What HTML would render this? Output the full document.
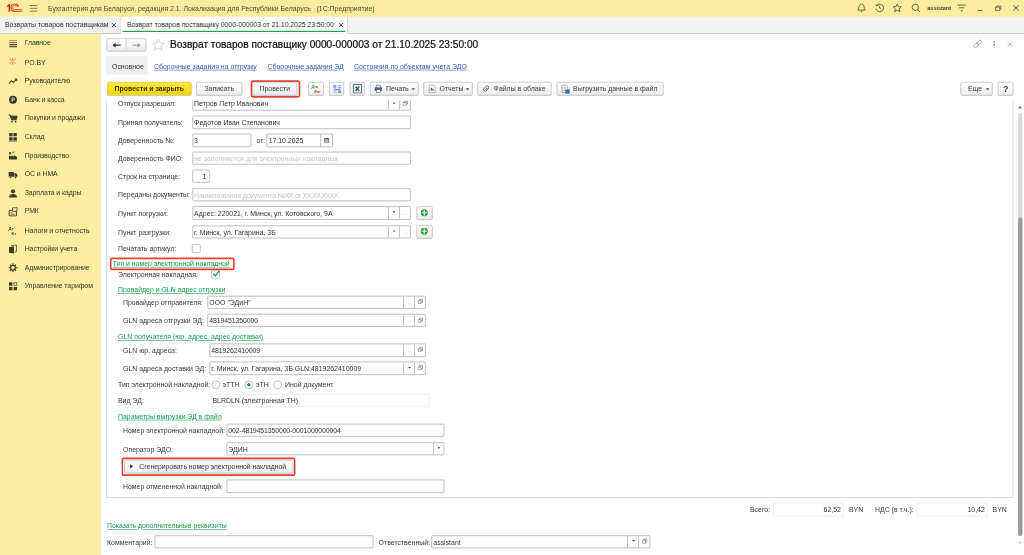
<!DOCTYPE html>
<html lang="ru">
<head>
<meta charset="utf-8">
<title>Возврат товаров поставщику</title>
<style>
*{box-sizing:border-box;margin:0;padding:0}
html,body{width:1024px;height:555px;overflow:hidden;background:#fff}
#root{position:absolute;left:0;top:0;width:1920px;height:954.7px;transform:scale(0.533333,0.581333);transform-origin:0 0;overflow:hidden}
body{font-family:"Liberation Sans",Arial,sans-serif;font-size:12.99px;color:#3a3a3a;position:relative}
.a{position:absolute}
.t{position:absolute;white-space:nowrap;line-height:17.2px;height:17.2px}
#top{left:0;top:0;width:1920px;height:28.56px;background:#fbed9e}
#tabs{left:0;top:28.56px;width:1920px;height:29.24px;background:#f2f2f2;border-bottom:1px solid #a9a9a9}
#side{left:0;top:57.8px;width:187.5px;height:897.94px;background:#fcee9f}
#sideshadow{left:187.5px;top:57.8px;width:3.75px;height:897.94px;background:linear-gradient(90deg,#e4e0c8,#fff)}
.si{position:absolute;left:46.31px;letter-spacing:-0.13px;white-space:nowrap;line-height:17.2px;height:17.2px;color:#333}
.lnk{color:#2a5db0;text-decoration:underline}
.glnk{color:#149c4a;text-decoration:underline}
.btn{position:absolute;border:1px solid #a8a8a8;border-radius:3px;background:linear-gradient(#ffffff,#ececec);height:23.39px;line-height:22.53px;text-align:center;white-space:nowrap;color:#3a3a3a;box-shadow:0 0.94px 0.94px rgba(0,0,0,.18)}
.in{position:absolute;border:1px solid #8c8c8c;border-radius:1.69px;background:#fff;height:22.36px;line-height:21.16px;white-space:nowrap;padding-left:2.44px;color:#333;overflow:hidden}
.ph{color:#c4c4c4}
.sep{position:absolute;top:0;bottom:0;width:1px;background:#909090}
.lab{position:absolute;white-space:nowrap;line-height:17.2px;height:17.2px;color:#383838}
.lab.glnk{color:#149c4a}
</style>
</head>
<body>
<div id="root">
<!-- TOP BAR -->
<div id="top" class="a"></div>
<div id="tabs" class="a"></div>
<div id="side" class="a"></div>
<div id="sideshadow" class="a"></div>

<!-- logo 1C -->
<svg class="a" style="left:12.19px;top:6.02px" width="31.88" height="17.2" viewBox="0 0 17 10" preserveAspectRatio="none">
 <path d="M0.8 3.3 L2.95 1.3 L2.95 8.3" fill="none" stroke="#e0312b" stroke-width="1.6"/>
 <path d="M11.85 3.4 A3.65 3.65 0 1 0 8.3 7.75 L15.5 7.75" fill="none" stroke="#e0312b" stroke-width="1.1"/>
 <path d="M10.2 3.6 A2 2 0 1 0 8.3 6.1 L15.5 6.1" fill="none" stroke="#e0312b" stroke-width="0.75"/>
</svg>
<!-- hamburger -->
<svg class="a" style="left:55.31px;top:6.88px" width="16.88" height="15.48" viewBox="0 0 9 9" preserveAspectRatio="none">
 <path d="M0.5 1.45H8M0.5 4.3H8M0.5 7.1H8" stroke="#6b6650" stroke-width="0.85" fill="none"/>
</svg>
<div class="t" style="left:90px;top:6.02px;color:#4a4632">Бухгалтерия для Беларуси, редакция 2.1. Локализация для Республики Беларусь&nbsp;&nbsp;&nbsp;(1С:Предприятие)</div>
<!-- bell -->
<svg class="a" style="left:1605.94px;top:5.16px" width="18.75" height="17.2" viewBox="0 0 10 10" preserveAspectRatio="none">
 <path d="M1.2 7.2 C2.4 6.2 2.2 4.6 2.6 3.2 C3 1.8 4 1.2 5 1.2 C6 1.2 7 1.8 7.4 3.2 C7.8 4.6 7.6 6.2 8.8 7.2 Z" fill="none" stroke="#4a4632" stroke-width="0.8" stroke-linejoin="round"/>
 <path d="M4.1 8.3 A1 1 0 0 0 5.9 8.3" fill="none" stroke="#4a4632" stroke-width="0.8"/>
</svg>
<!-- history -->
<svg class="a" style="left:1639.69px;top:5.16px" width="18.75" height="17.2" viewBox="0 0 10 10" preserveAspectRatio="none">
 <path d="M2.2 2.6 A3.8 3.8 0 1 1 1.3 5.6" fill="none" stroke="#4a4632" stroke-width="0.8"/>
 <path d="M0.9 1.3 L2.1 3 L3.9 2.4" fill="none" stroke="#4a4632" stroke-width="0.8"/>
 <path d="M5 2.8 V5.2 L6.6 6.4" fill="none" stroke="#4a4632" stroke-width="0.8"/>
</svg>
<!-- star -->
<svg class="a" style="left:1673.44px;top:5.16px" width="18.75" height="17.2" viewBox="0 0 10 10" preserveAspectRatio="none">
 <path d="M5 1 L6.2 3.7 L9.1 4 L6.9 5.9 L7.6 8.8 L5 7.3 L2.4 8.8 L3.1 5.9 L0.9 4 L3.8 3.7 Z" fill="none" stroke="#4a4632" stroke-width="0.8" stroke-linejoin="round"/>
</svg>
<!-- search -->
<svg class="a" style="left:1708.12px;top:5.16px" width="18.75" height="17.2" viewBox="0 0 10 10" preserveAspectRatio="none">
 <circle cx="4.4" cy="4.4" r="3.2" fill="none" stroke="#4a4632" stroke-width="0.8"/>
 <path d="M6.7 6.8 L8.8 9" stroke="#4a4632" stroke-width="1" fill="none"/>
</svg>
<div class="t" style="left:1738.69px;top:5.5px;font-weight:bold;font-size:10.69px;letter-spacing:-0.22px;color:#4a4632">assistant</div>
<!-- filter/menu -->
<svg class="a" style="left:1794.38px;top:5.16px" width="18.75" height="18.92" viewBox="0 0 10 11" preserveAspectRatio="none">
 <path d="M0.8 2.2H9M2.2 4.9H7.6" stroke="#4a4632" stroke-width="0.8" fill="none"/>
 <path d="M3.8 7.3 H6 L4.9 8.8 Z" fill="#4a4632"/>
</svg>
<!-- window controls -->
<svg class="a" style="left:1830px;top:5.16px" width="18.75" height="17.2" viewBox="0 0 10 10" preserveAspectRatio="none"><path d="M1.4 7.5H6.5" stroke="#4a4632" stroke-width="0.8"/></svg>
<svg class="a" style="left:1862.81px;top:5.16px" width="18.75" height="17.2" viewBox="0 0 10 10" preserveAspectRatio="none">
 <rect x="2" y="4.2" width="4.2" height="3.2" fill="none" stroke="#4a4632" stroke-width="0.65"/>
 <path d="M3.2 4.2 V3.1 H7.4 V6.3 H6.2" fill="none" stroke="#4a4632" stroke-width="0.65"/>
</svg>
<svg class="a" style="left:1895.62px;top:5.16px" width="18.75" height="17.2" viewBox="0 0 10 10" preserveAspectRatio="none"><path d="M2 2.4 L7.6 7.6 M7.6 2.4 L2 7.6" stroke="#4a4632" stroke-width="0.8"/></svg>

<!-- TABS -->
<div class="t" style="left:9.38px;top:33.89px;color:#333">Возвраты товаров поставщикам</div>
<svg class="a" style="left:208.12px;top:37.84px" width="11.25" height="10.32" viewBox="0 0 6 6" preserveAspectRatio="none"><path d="M1 1 L5 5 M5 1 L1 5" stroke="#333" stroke-width="0.9"/></svg>
<div class="a" style="left:225px;top:28.56px;width:1px;height:28.56px;background:#b0b0b0"></div>
<div class="a" style="left:226.12px;top:28.56px;width:424.88px;height:28.38px;background:#fff"></div>
<div class="a" style="left:230.25px;top:53.15px;width:417px;height:2.06px;background:#18a04c"></div>
<div class="a" style="left:650.62px;top:28.56px;width:1px;height:28.56px;background:#b0b0b0"></div>
<div class="t" style="left:238.12px;top:33.89px;letter-spacing:-0.11px;color:#333">Возврат товаров поставщику 0000-000003 от 21.10.2025 23:50:00</div>
<svg class="a" style="left:633.75px;top:37.84px" width="11.25" height="10.32" viewBox="0 0 6 6" preserveAspectRatio="none"><path d="M1 1 L5 5 M5 1 L1 5" stroke="#333" stroke-width="0.9"/></svg>

<!--TOPCONTENT-->
<svg class="a" style="left:15px;top:66.74px" width="18.75" height="17.2" viewBox="0 0 10 10" preserveAspectRatio="none"><path d="M1.2 1.5H9" stroke="#9a9468" stroke-width="1.05"/><path d="M1.2 3.6H9" stroke="#6f6b4e" stroke-width="1.05"/><path d="M1.2 5.7H9" stroke="#4a4736" stroke-width="1.05"/><path d="M1.2 7.8H9" stroke="#2c2a26" stroke-width="1.05"/></svg>
<div class="si" style="top:65.45px">Главное</div>
<svg class="a" style="left:15px;top:98.86px" width="18.75" height="17.2" viewBox="0 0 10 10" preserveAspectRatio="none"><path d="M4.6 0V3.2M4.6 4.4V7.4M1.4 1.4L3.9 3.3M5.3 4.3L7.8 6.2M7.8 1.4L5.3 3.3M3.9 4.3L1.4 6.2" stroke="#e2574c" stroke-width="0.65"/></svg>
<div class="si" style="top:97.57px">PO.BY</div>
<svg class="a" style="left:15px;top:130.96px" width="18.75" height="17.2" viewBox="0 0 10 10" preserveAspectRatio="none"><path d="M1 7.5L3.6 4.6L5.4 6.2L8.6 3" fill="none" stroke="#3d3a2c" stroke-width="1.1"/><path d="M6.3 2.4H9.2V5.3Z" fill="#3d3a2c"/></svg>
<div class="si" style="top:129.67px">Руководителю</div>
<svg class="a" style="left:15px;top:163.07px" width="18.75" height="17.2" viewBox="0 0 10 10" preserveAspectRatio="none"><circle cx="5" cy="5" r="3.9" fill="#3d3a2c"/><path d="M4.2 7V3.2H5.4A1.1 1.1 0 0 1 5.4 5.4H3.6" fill="none" stroke="#fcee9f" stroke-width="0.8"/></svg>
<div class="si" style="top:161.78px">Банк и касса</div>
<svg class="a" style="left:15px;top:195.19px" width="18.75" height="17.2" viewBox="0 0 10 10" preserveAspectRatio="none"><path d="M0.6 1.6H2.2L3.4 6.4H8.2L9.2 2.8H2.6" fill="none" stroke="#3d3a2c" stroke-width="1"/><path d="M2.8 3H9L8.2 6.2H3.5Z" fill="#3d3a2c"/><circle cx="4" cy="8.2" r="0.9" fill="#3d3a2c"/><circle cx="7.6" cy="8.2" r="0.9" fill="#3d3a2c"/></svg>
<div class="si" style="top:193.9px">Покупки и продажи</div>
<svg class="a" style="left:15px;top:227.31px" width="18.75" height="17.2" viewBox="0 0 10 10" preserveAspectRatio="none"><path d="M1.2 1H4.6V4.4H1.2ZM5.4 1H8.8V4.4H5.4ZM1.2 5.2H4.6V8.6H1.2ZM5.4 5.2H8.8V8.6H5.4Z" fill="#3d3a2c"/><path d="M0.8 9.4H9.2" stroke="#3d3a2c" stroke-width="0.7"/></svg>
<div class="si" style="top:226.01px">Склад</div>
<svg class="a" style="left:15px;top:259.4px" width="18.75" height="17.2" viewBox="0 0 10 10" preserveAspectRatio="none"><path d="M1 9V4.6L3.4 6V4.6L5.8 6V4.6L9 6.2V9Z" fill="#3d3a2c"/><path d="M1.2 4V1.4H2.8V4Z" fill="#3d3a2c"/><path d="M3.6 2.4C4.6 1.2 5.6 2.2 6.6 1.2" stroke="#3d3a2c" stroke-width="0.7" fill="none"/></svg>
<div class="si" style="top:258.11px">Производство</div>
<svg class="a" style="left:15px;top:291.52px" width="18.75" height="17.2" viewBox="0 0 10 10" preserveAspectRatio="none"><path d="M0.6 2.2H6V7H0.6Z" fill="#3d3a2c"/><path d="M6.4 3.6H8.2L9.5 5.2V7H6.4Z" fill="#3d3a2c"/><circle cx="2.6" cy="7.6" r="1.1" fill="#3d3a2c" stroke="#fcee9f" stroke-width="0.4"/><circle cx="7.6" cy="7.6" r="1.1" fill="#3d3a2c" stroke="#fcee9f" stroke-width="0.4"/></svg>
<div class="si" style="top:290.23px">ОС и НМА</div>
<svg class="a" style="left:15px;top:323.64px" width="18.75" height="17.2" viewBox="0 0 10 10" preserveAspectRatio="none"><circle cx="5" cy="3" r="2.1" fill="#3d3a2c"/><path d="M1 9.2C1 6.4 3 5.6 5 5.6C7 5.6 9 6.4 9 9.2Z" fill="#3d3a2c"/></svg>
<div class="si" style="top:322.35px">Зарплата и кадры</div>
<svg class="a" style="left:15px;top:355.73px" width="18.75" height="17.2" viewBox="0 0 10 10" preserveAspectRatio="none"><path d="M1.2 3.4H8.4V9H1.2Z" fill="none" stroke="#3d3a2c" stroke-width="1"/><path d="M4.6 0.8H9V4.4H4.6Z" fill="#fcee9f" stroke="#3d3a2c" stroke-width="0.8"/><path d="M2.6 5.6H4M2.6 7.2H6.6" stroke="#3d3a2c" stroke-width="0.8"/></svg>
<div class="si" style="top:354.44px">РМК</div>
<svg class="a" style="left:15px;top:387.85px" width="18.75" height="17.2" viewBox="0 0 10 10" preserveAspectRatio="none"><text x="0.5" y="4.2" font-size="4.2" font-family="Liberation Sans" font-weight="bold" fill="#3d3a2c">Д</text><text x="3.6" y="4.4" font-size="3.6" font-family="Liberation Sans" font-weight="bold" fill="#3d3a2c">т</text><text x="3.6" y="9" font-size="4.2" font-family="Liberation Sans" font-weight="bold" fill="#3d3a2c">К</text><text x="6.6" y="9.2" font-size="3.6" font-family="Liberation Sans" font-weight="bold" fill="#3d3a2c">т</text></svg>
<div class="si" style="top:386.56px">Налоги и отчетность</div>
<svg class="a" style="left:15px;top:419.97px" width="18.75" height="17.2" viewBox="0 0 10 10" preserveAspectRatio="none"><path d="M1 3L6 2V9.4L1 8.6Z" fill="#3d3a2c"/><path d="M3 1.6L8.4 0.8V7.6L6.6 8" fill="none" stroke="#3d3a2c" stroke-width="0.8"/></svg>
<div class="si" style="top:418.68px">Настройки учета</div>
<svg class="a" style="left:15px;top:452.06px" width="18.75" height="17.2" viewBox="0 0 10 10" preserveAspectRatio="none"><circle cx="5" cy="5" r="2.4" fill="none" stroke="#3d3a2c" stroke-width="1.2"/><path d="M5 0.6V2.2M5 7.8V9.4M0.6 5H2.2M7.8 5H9.4M1.9 1.9L3 3M7 7L8.1 8.1M8.1 1.9L7 3M3 7L1.9 8.1" stroke="#3d3a2c" stroke-width="1.1"/></svg>
<div class="si" style="top:450.77px">Администрирование</div>
<svg class="a" style="left:15px;top:484.18px" width="18.75" height="17.2" viewBox="0 0 10 10" preserveAspectRatio="none"><path d="M1 1H4.4V4.4H1ZM1 5.6H4.4V9H1ZM5.6 5.6H9V9H5.6Z" fill="#3d3a2c"/><path d="M5.9 1.3H8.7V4.1H5.9Z" fill="none" stroke="#3d3a2c" stroke-width="0.7"/></svg>
<div class="si" style="top:482.89px">Управление тарифом</div>
<!--SIDECONTENT-->

<!-- nav buttons -->
<div class="btn" style="left:199.88px;top:66.06px;width:74.44px;height:21.85px"></div>
<div class="a" style="left:236.44px;top:67.09px;width:1px;height:19.78px;background:#bbb"></div>
<svg class="a" style="left:210px;top:69.84px" width="18.75" height="15.48" viewBox="0 0 10 9" preserveAspectRatio="none"><path d="M1 4.5H8.6" stroke="#333" stroke-width="1.2"/><path d="M0.6 4.5L3.6 2V7Z" fill="#333"/></svg>
<svg class="a" style="left:245.62px;top:69.84px" width="18.75" height="15.48" viewBox="0 0 10 9" preserveAspectRatio="none"><path d="M1.4 4.5H9" stroke="#9a9a9a" stroke-width="1"/><path d="M9.4 4.5L6.4 2.2V6.8Z" fill="#9a9a9a"/></svg>
<!-- fav star -->
<svg class="a" style="left:283.69px;top:64.68px" width="26.25" height="24.08" viewBox="0 0 14 14" preserveAspectRatio="none"><path d="M7 1.4 L8.7 5.2 L12.8 5.6 L9.7 8.3 L10.6 12.4 L7 10.3 L3.4 12.4 L4.3 8.3 L1.2 5.6 L5.3 5.2 Z" fill="none" stroke="#c9c9c9" stroke-width="0.8" stroke-linejoin="round"/></svg>
<div class="t" style="left:318.75px;top:65.37px;height:24.08px;line-height:24.08px;font-size:19.03px;color:#111;-webkit-text-stroke:0.41px #111">Возврат товаров поставщику 0000-000003 от 21.10.2025 23:50:00</div>
<!-- right icons -->
<svg class="a" style="left:1824.38px;top:67.09px" width="18.75" height="17.2" viewBox="0 0 10 10" preserveAspectRatio="none"><g transform="rotate(-45 5 5)" fill="none" stroke="#8a8a8a" stroke-width="0.7"><rect x="0.3" y="3.5" width="5.2" height="3" rx="1.5"/><rect x="4.5" y="3.5" width="5.2" height="3" rx="1.5"/></g></svg>
<div class="a" style="left:1862.81px;top:70.53px;width:2.25px;height:11.18px;background:repeating-linear-gradient(#777 0 2.81px,#fff 2.81px 4.69px)"></div>
<svg class="a" style="left:1888.12px;top:70.53px" width="11.25" height="10.32" viewBox="0 0 6 6" preserveAspectRatio="none"><path d="M1 1L5 5M5 1L1 5" stroke="#8a8a8a" stroke-width="0.7"/></svg>
<!-- nav row -->
<div class="a" style="left:198.75px;top:96.33px;width:77.81px;height:31.82px;background:#efefef;border-radius:3.75px"></div>
<div class="t" style="left:210px;top:105.79px;color:#333">Основное</div>
<div class="t lnk" style="left:288.75px;top:105.62px">Сборочные задания на отгрузку</div>
<div class="t lnk" style="left:501.56px;top:105.62px">Сборочные задания ЭД</div>
<div class="t lnk" style="left:663.75px;top:105.62px">Состояния по объектам учета ЭДО</div>

<!--HEADER-->

<div class="btn" style="left:200.62px;top:140.54px;width:158.44px;font-weight:bold;background:linear-gradient(#ffe93a,#f7d400);border-color:#c4a600;color:#3a3000">Провести и закрыть</div>
<div class="btn" style="left:368.44px;top:140.54px;width:85.31px">Записать</div>
<div class="a" style="left:470.06px;top:138.47px;width:93px;height:29.76px;border:3.19px solid #e8402f;border-radius:4.5px"></div>
<div class="btn" style="left:473.25px;top:140.88px;width:84px">Провести</div>
<div class="btn" style="left:578.06px;top:140.54px;width:28.69px"></div>
<div class="btn" style="left:616.5px;top:140.54px;width:28.69px"></div>
<div class="btn" style="left:655.5px;top:140.54px;width:28.69px"></div>
<svg class="a" style="left:582.19px;top:143.64px" width="20.62" height="18.92" viewBox="0 0 11 11" preserveAspectRatio="none"><text x="1" y="4.7" font-size="4.2" font-weight="bold" font-style="italic" font-family="Liberation Sans" fill="#2fa14a">Дт</text><text x="3.8" y="8.9" font-size="4.2" font-weight="bold" font-style="italic" font-family="Liberation Sans" fill="#e0352b">Кт</text></svg>
<svg class="a" style="left:622.5px;top:144.5px" width="18.75" height="17.2" viewBox="0 0 10 10" preserveAspectRatio="none"><path d="M1 0.8H4V3.4H1ZM5.8 6H9V8.8H5.8Z" fill="#7fa3dc"/><path d="M5.4 1.2H8.8M5.4 2.8H8.8M1 6.4H4.4M1 8H4.4" stroke="#8fb0e0" stroke-width="0.8"/><path d="M2.6 3.6V5.2H7.4V5.8M6 3.6H8.4" stroke="#3c67b8" stroke-width="0.7" fill="none"/></svg>
<svg class="a" style="left:661.31px;top:143.98px" width="18.75" height="17.2" viewBox="0 0 10 10" preserveAspectRatio="none"><rect x="0.7" y="0.7" width="8.2" height="8.6" fill="#fff" stroke="#2b5f6b" stroke-width="0.9"/><path d="M3 2.8L6.8 7.4M6.8 2.8L3 7.4" stroke="#1f5a36" stroke-width="1.3"/></svg>

<div class="btn" style="left:693.75px;top:140.54px;width:90.94px;text-align:left;padding-left:29.06px">Печать</div>
<svg class="a" style="left:701.25px;top:145.36px" width="16.88" height="15.48" viewBox="0 0 9 9" preserveAspectRatio="none"><path d="M2.4 3V1H6.6V3" fill="#fff" stroke="#4a5f86" stroke-width="0.7"/><rect x="0.8" y="3" width="7.4" height="3.6" rx="0.6" fill="#4a5f86"/><rect x="2.4" y="5.4" width="4.2" height="2.8" fill="#fff" stroke="#4a5f86" stroke-width="0.6"/></svg>
<svg class="a" style="left:770.62px;top:151.38px" width="7.5" height="5.16" viewBox="0 0 4 3" preserveAspectRatio="none"><path d="M0.3 0.4H3.7L2 2.6Z" fill="#555"/></svg>

<div class="btn" style="left:794.06px;top:140.54px;width:91.88px;text-align:left;padding-left:29.06px">Отчеты</div>
<svg class="a" style="left:801.56px;top:145.36px" width="16.88" height="15.48" viewBox="0 0 9 9" preserveAspectRatio="none"><path d="M1.6 0.8H5.6L7.4 2.6V8.2H1.6Z" fill="#fff" stroke="#8a8a8a" stroke-width="0.6"/><rect x="3" y="3.4" width="1.4" height="3" fill="#d8372c"/><rect x="4.6" y="4.4" width="1.4" height="2" fill="#2fa14a"/></svg>
<svg class="a" style="left:872.81px;top:151.38px" width="7.5" height="5.16" viewBox="0 0 4 3" preserveAspectRatio="none"><path d="M0.3 0.4H3.7L2 2.6Z" fill="#555"/></svg>

<div class="btn" style="left:895.31px;top:140.54px;width:138.75px;text-align:left;padding-left:29.25px">Файлы в облаке</div>
<svg class="a" style="left:902.81px;top:145.7px" width="15" height="13.76" viewBox="0 0 9 9" preserveAspectRatio="none"><path d="M6.9 3.2L3.8 6.3A1.1 1.1 0 0 1 2.2 4.7L5.4 1.6A1.7 1.7 0 0 1 7.8 4L4.5 7.3" fill="none" stroke="#505050" stroke-width="1"/></svg>

<div class="btn" style="left:1044.38px;top:140.54px;width:199.69px;text-align:left;padding-left:29.06px">Выгрузить данные в файл</div>
<svg class="a" style="left:1050.94px;top:144.5px" width="18.75" height="17.2" viewBox="0 0 10 10" preserveAspectRatio="none"><path d="M1.6 0.8H5.6L7.2 2.4V8.4H1.6Z" fill="#fff" stroke="#7a7a7a" stroke-width="0.6"/><path d="M3 3H5.6M3 4.4H5.6" stroke="#5f86c9" stroke-width="0.6"/><rect x="4.8" y="5.2" width="4.4" height="4.2" fill="#3c67b8"/><path d="M3 6.4H6.4" stroke="#2fa14a" stroke-width="0.9"/></svg>

<div class="btn" style="left:1800.94px;top:140.54px;width:60px;text-align:left;padding-left:12.94px">Еще</div>
<svg class="a" style="left:1848px;top:151.38px" width="7.5" height="5.16" viewBox="0 0 4 3" preserveAspectRatio="none"><path d="M0.3 0.4H3.7L2 2.6Z" fill="#555"/></svg>
<div class="btn" style="left:1871.25px;top:140.54px;width:29.06px;font-weight:bold;font-size:15.75px">?</div>

<!--TOOLBAR-->
<div class="a" style="left:198.75px;top:173.05px;width:1701.56px;height:682.74px;border:1px solid #c2c2c2;border-top:none"></div>
<div class="lab" style="left:221.25px;top:169.61px">Отпуск разрешил:</div>
<div class="a" style="left:337.5px;top:172.71px;width:450px;height:20.64px;overflow:hidden"><div class="in" style="left:23.06px;top:-5.33px;width:409.69px;height:22.53px"><span style="position:relative;top:0px">Петров Петр Иванович</span><i class="sep" style="right:40.69px"></i><i class="sep" style="right:19.69px"></i><svg class="a" style="right:26.81px;top:7.22px" width="6" height="3.44" viewBox="0 0 4 3" preserveAspectRatio="none"><path d="M0.2 0.3H3.8L2 2.8Z" fill="#333"/></svg><svg class="a" style="right:3.75px;top:4.47px" width="10.12" height="9.29" viewBox="0 0 6 6" preserveAspectRatio="none"><path d="M0.6 2.2H3.8V5.4H0.6Z" fill="none" stroke="#666" stroke-width="0.7"/><path d="M2.2 2.2V0.6H5.4V3.8H3.8" fill="none" stroke="#666" stroke-width="0.7"/></svg></div></div>
<div class="lab" style="left:221.25px;top:202.29px">Принял получатель:</div>
<div class="in" style="left:360.56px;top:199.2px;width:409.69px;height:22.36px;">Федотов Иван Степанович</div>
<div class="lab" style="left:221.25px;top:233.26px">Доверенность №:</div>
<div class="in" style="left:360.56px;top:230.16px;width:110.06px;height:22.36px;">3</div>
<div class="lab" style="left:480.94px;top:233.26px">от:</div>
<div class="in" style="left:500.25px;top:230.16px;width:123.75px;height:22.36px;">17.10.2025<i class="sep" style="right:20.62px"></i><svg class="a" style="right:4.69px;top:5.16px" width="11.25" height="10.32" viewBox="0 0 6 6" preserveAspectRatio="none"><rect x="0.6" y="0.9" width="4.8" height="4.5" fill="#555"/><rect x="1.4" y="2.4" width="3.2" height="2.2" fill="#fff"/><path d="M1.8 3H4.2M1.8 4H4.2" stroke="#555" stroke-width="0.4"/></svg></div>
<div class="lab" style="left:221.25px;top:264.22px">Доверенность ФИО:</div>
<div class="in" style="left:360.56px;top:261.12px;width:409.69px;height:22.36px;"><span class="ph">не заполняется для электронных накладных</span></div>
<div class="lab" style="left:221.25px;top:295.18px">Строк на странице:</div>
<div class="in" style="left:360.56px;top:292.09px;width:32.81px;height:22.36px;text-align:right;padding-right:5.62px;padding-left:0">1</div>
<div class="lab" style="left:221.25px;top:326.49px">Переданы документы:</div>
<div class="in" style="left:360.56px;top:324.08px;width:409.69px;height:22.36px;"><span class="ph" style="letter-spacing:-0.15px">Наименование документа <span style="letter-spacing:-1.05px;word-spacing:1.31px">№XX от XX.XX.XXXX</span></span></div>
<div class="lab" style="left:221.25px;top:359.17px">Пункт погрузки:</div>
<div class="in" style="left:360.56px;top:355.22px;width:409.69px;height:23.05px;line-height:21.5px;">Адрес: 220021, г. Минск, ул. Котовского, 9А<i class="sep" style="right:40.69px"></i><i class="sep" style="right:19.69px"></i><svg class="a" style="right:26.81px;top:7.22px" width="6" height="3.44" viewBox="0 0 4 3" preserveAspectRatio="none"><path d="M0.2 0.3H3.8L2 2.8Z" fill="#333"/></svg><span class="a" style="right:3.75px;top:-1.03px;color:#aaa;font-size:9.75px;letter-spacing:0.19px">...</span></div>
<div class="btn" style="left:780.56px;top:354.7px;width:30px;height:23.22px"></div>
<svg class="a" style="left:788.25px;top:359.17px" width="15" height="13.76" viewBox="0 0 8 8" preserveAspectRatio="none"><circle cx="4" cy="4" r="3.5" fill="#2da03c"/><path d="M4 1.3V6.7" stroke="#fff" stroke-width="1.1"/><path d="M1.4 4H6.6" stroke="#e9f6ea" stroke-width="1"/></svg>
<div class="lab" style="left:221.25px;top:391.17px">Пункт разгрузки:</div>
<div class="in" style="left:360.56px;top:388.07px;width:409.69px;height:22.36px;">г. Минск, ул. Гагарина, 3Б<i class="sep" style="right:40.69px"></i><i class="sep" style="right:19.69px"></i><svg class="a" style="right:26.81px;top:7.22px" width="6" height="3.44" viewBox="0 0 4 3" preserveAspectRatio="none"><path d="M0.2 0.3H3.8L2 2.8Z" fill="#333"/></svg><span class="a" style="right:3.75px;top:-1.03px;color:#aaa;font-size:9.75px;letter-spacing:0.19px">...</span></div>
<div class="btn" style="left:780.56px;top:387.04px;width:30px;height:23.22px"></div>
<svg class="a" style="left:788.25px;top:391.34px" width="15" height="13.76" viewBox="0 0 8 8" preserveAspectRatio="none"><circle cx="4" cy="4" r="3.5" fill="#2da03c"/><path d="M4 1.3V6.7" stroke="#fff" stroke-width="1.1"/><path d="M1.4 4H6.6" stroke="#e9f6ea" stroke-width="1"/></svg>
<div class="lab" style="left:221.25px;top:419.04px">Печатать артикул:</div>
<div class="a" style="left:360px;top:420.41px;width:15.94px;height:14.62px;border:1px solid #8f8f8f;border-radius:2.25px;background:#fff"></div>
<div class="a" style="left:205.88px;top:443.12px;width:234.38px;height:22.02px;border:3.19px solid #e8402f;border-radius:4.12px"></div>
<div class="lab glnk" style="left:211.5px;top:444.84px;letter-spacing:-0.07px">Тип и номер электронной накладной</div>
<div class="lab" style="left:221.25px;top:464.11px">Электронная накладная:</div>
<div class="a" style="left:396px;top:465.14px;width:15.94px;height:14.62px;border:1px solid #8f8f8f;border-radius:2.25px;background:#fff"></div>
<svg class="a" style="left:397.12px;top:462.73px" width="16.88" height="15.48" viewBox="0 0 9 9" preserveAspectRatio="none"><path d="M1.6 4.6L3.6 6.8L7.6 1.4" fill="none" stroke="#1f9a3f" stroke-width="1.3"/></svg>
<div class="lab glnk" style="left:221.25px;top:489.91px">Провайдер и GLN адрес отгрузки</div>
<div class="lab" style="left:230.62px;top:511.93px">Провайдер отправителя:</div>
<div class="in" style="left:389.06px;top:508.83px;width:409.31px;height:22.36px;">ООО "ЭДиН"<i class="sep" style="right:40.69px"></i><i class="sep" style="right:19.69px"></i><span class="a" style="right:23.44px;top:-1.03px;color:#aaa;font-size:9.75px;letter-spacing:0.19px">...</span><svg class="a" style="right:3.75px;top:4.47px" width="10.12" height="9.29" viewBox="0 0 6 6" preserveAspectRatio="none"><path d="M0.6 2.2H3.8V5.4H0.6Z" fill="none" stroke="#666" stroke-width="0.7"/><path d="M2.2 2.2V0.6H5.4V3.8H3.8" fill="none" stroke="#666" stroke-width="0.7"/></svg></div>
<div class="lab" style="left:230.62px;top:543.23px">GLN адреса отгрузки ЭД:</div>
<div class="in" style="left:389.06px;top:540.14px;width:409.31px;height:22.36px;"><span style="letter-spacing:-0.19px">4819451350000</span><i class="sep" style="right:40.69px"></i><i class="sep" style="right:19.69px"></i><span class="a" style="right:23.44px;top:-1.03px;color:#aaa;font-size:9.75px;letter-spacing:0.19px">...</span><svg class="a" style="right:3.75px;top:4.47px" width="10.12" height="9.29" viewBox="0 0 6 6" preserveAspectRatio="none"><path d="M0.6 2.2H3.8V5.4H0.6Z" fill="none" stroke="#666" stroke-width="0.7"/><path d="M2.2 2.2V0.6H5.4V3.8H3.8" fill="none" stroke="#666" stroke-width="0.7"/></svg></div>
<div class="lab glnk" style="left:221.25px;top:571.44px">GLN получателя (юр. адрес, адрес доставки)</div>
<div class="lab" style="left:230.62px;top:594.5px">GLN юр. адреса:</div>
<div class="in" style="left:392.81px;top:591.4px;width:405.56px;height:22.36px;"><span style="letter-spacing:-0.19px">4819262410009</span><i class="sep" style="right:40.69px"></i><i class="sep" style="right:19.69px"></i><span class="a" style="right:23.44px;top:-1.03px;color:#aaa;font-size:9.75px;letter-spacing:0.19px">...</span><svg class="a" style="right:3.75px;top:4.47px" width="10.12" height="9.29" viewBox="0 0 6 6" preserveAspectRatio="none"><path d="M0.6 2.2H3.8V5.4H0.6Z" fill="none" stroke="#666" stroke-width="0.7"/><path d="M2.2 2.2V0.6H5.4V3.8H3.8" fill="none" stroke="#666" stroke-width="0.7"/></svg></div>
<div class="lab" style="left:230.62px;top:625.46px">GLN адреса доставки ЭД:</div>
<div class="in" style="left:392.81px;top:622.36px;width:405.56px;height:22.36px;">г. Минск, ул. Гагарина, 3Б GLN:4819262410009<i class="sep" style="right:40.69px"></i><i class="sep" style="right:19.69px"></i><svg class="a" style="right:26.81px;top:7.22px" width="6" height="3.44" viewBox="0 0 4 3" preserveAspectRatio="none"><path d="M0.2 0.3H3.8L2 2.8Z" fill="#333"/></svg><svg class="a" style="right:3.75px;top:4.47px" width="10.12" height="9.29" viewBox="0 0 6 6" preserveAspectRatio="none"><path d="M0.6 2.2H3.8V5.4H0.6Z" fill="none" stroke="#666" stroke-width="0.7"/><path d="M2.2 2.2V0.6H5.4V3.8H3.8" fill="none" stroke="#666" stroke-width="0.7"/></svg></div>
<div class="lab" style="left:221.25px;top:652.29px">Тип электронной накладной:</div>
<svg class="a" style="left:395.62px;top:653.5px" width="17.25" height="15.83" viewBox="0 0 8 8" preserveAspectRatio="none"><circle cx="4" cy="4" r="3.45" fill="#fff" stroke="#8f8f8f" stroke-width="0.5"/></svg>
<div class="lab" style="left:417.19px;top:652.29px">эТТН</div>
<svg class="a" style="left:457.5px;top:653.5px" width="17.25" height="15.83" viewBox="0 0 8 8" preserveAspectRatio="none"><circle cx="4" cy="4" r="3.45" fill="#fff" stroke="#8f8f8f" stroke-width="0.5"/><circle cx="4" cy="4" r="1.5" fill="#2a8f3a"/></svg>
<div class="lab" style="left:480px;top:652.29px">эТН</div>
<svg class="a" style="left:511.88px;top:653.5px" width="17.25" height="15.83" viewBox="0 0 8 8" preserveAspectRatio="none"><circle cx="4" cy="4" r="3.45" fill="#fff" stroke="#8f8f8f" stroke-width="0.5"/></svg>
<div class="lab" style="left:534.38px;top:652.29px">Иной документ</div>
<div class="lab" style="left:221.25px;top:681.19px">Вид ЭД:</div>
<div class="in" style="left:392.81px;top:678.1px;width:412.5px;height:22.36px;border-color:#e6e6e6"><span style="padding-left:2.06px"></span>BLRDLN (электронная ТН)</div>
<div class="lab glnk" style="left:221.25px;top:708.2px">Параметры выгрузки ЭД в файл</div>
<div class="lab" style="left:230.62px;top:731.42px">Номер электронной накладной:</div>
<div class="in" style="left:424.69px;top:728.5px;width:408.75px;height:22.36px;letter-spacing:-0.24px">002-4819451350000-0001000000004</div>
<div class="lab" style="left:230.62px;top:763.76px">Оператор ЭДО:</div>
<div class="in" style="left:424.69px;top:760.67px;width:408.75px;height:22.36px;">ЭДИН<i class="sep" style="right:19.69px"></i><svg class="a" style="right:6.75px;top:7.22px" width="6" height="3.44" viewBox="0 0 4 3" preserveAspectRatio="none"><path d="M0.2 0.3H3.8L2 2.8Z" fill="#333"/></svg></div>
<div class="a" style="left:228px;top:786.98px;width:326.25px;height:31.65px;border:3.19px solid #e8402f;border-radius:4.5px"></div>
<div class="btn" style="left:232.5px;top:790.77px;width:317.81px;height:23.22px;text-align:left;padding-left:27.75px;letter-spacing:-0.11px">Сгенерировать номер электронной накладной</div>
<svg class="a" style="left:242.81px;top:797.99px" width="7.5" height="8.6" viewBox="0 0 4 5" preserveAspectRatio="none"><path d="M0.5 0.4L3.4 2.5L0.5 4.6Z" fill="#333"/></svg>
<div class="lab" style="left:230.62px;top:828.44px">Номер отмененной накладной:</div>
<div class="in" style="left:424.69px;top:825.34px;width:408.75px;height:22.36px;"></div>
<!--FORM-->
<div class="lab" style="left:1406.25px;top:867.66px">Всего:</div>
<div class="in" style="left:1450.31px;top:865.25px;width:131.25px;height:22.36px;text-align:right;padding-right:3.75px;border-color:#e2e2e2">62,52</div>
<div class="lab" style="left:1591.88px;top:867.66px">BYN</div>
<div class="lab" style="left:1640.62px;top:867.66px">НДС (в т.ч.):</div>
<div class="in" style="left:1719.38px;top:865.25px;width:132.19px;height:22.36px;text-align:right;padding-right:4.12px;border-color:#e2e2e2">10,42</div>
<div class="lab" style="left:1861.12px;top:867.66px">BYN</div>
<div class="lab glnk" style="left:200.62px;top:895.7px;letter-spacing:-0.07px">Показать дополнительные реквизиты</div>
<div class="lab" style="left:200.62px;top:923.91px">Комментарий:</div>
<div class="in" style="left:289.69px;top:920.81px;width:410.06px;height:22.36px;"></div>
<div class="lab" style="left:709.88px;top:923.91px">Ответственный:</div>
<div class="in" style="left:809.06px;top:920.81px;width:409.69px;height:22.36px;">assistant<i class="sep" style="right:40.69px"></i><i class="sep" style="right:19.69px"></i><svg class="a" style="right:26.81px;top:7.22px" width="6" height="3.44" viewBox="0 0 4 3" preserveAspectRatio="none"><path d="M0.2 0.3H3.8L2 2.8Z" fill="#333"/></svg><svg class="a" style="right:3.75px;top:4.47px" width="10.12" height="9.29" viewBox="0 0 6 6" preserveAspectRatio="none"><path d="M0.6 2.2H3.8V5.4H0.6Z" fill="none" stroke="#666" stroke-width="0.7"/><path d="M2.2 2.2V0.6H5.4V3.8H3.8" fill="none" stroke="#666" stroke-width="0.7"/></svg></div>
<svg class="a" style="left:1908.38px;top:180.62px" width="9.38" height="6.88" viewBox="0 0 5 4" preserveAspectRatio="none"><path d="M0.5 3.4L2.5 0.8L4.5 3.4Z" fill="#666"/></svg>
<div class="a" style="left:1908.75px;top:194.38px;width:8.25px;height:727.64px;border-radius:4.12px;background:#d9d9d9"></div>
<div class="a" style="left:1908.75px;top:374.14px;width:8.25px;height:547.88px;border-radius:4.12px;background:#9a9a9a"></div>
<svg class="a" style="left:1908.38px;top:930.62px" width="9.38" height="6.88" viewBox="0 0 5 4" preserveAspectRatio="none"><path d="M0.5 0.6L2.5 3.2L4.5 0.6Z" fill="#cfcfcf"/></svg>
<!--BOTTOM-->
</div>
</body>
</html>
